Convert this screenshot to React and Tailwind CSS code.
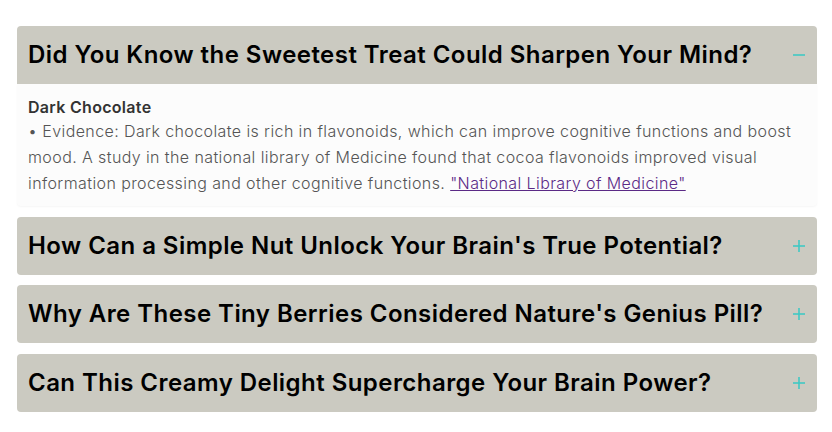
const items = [
  {
    q: 'Did You Know the Sweetest Treat Could Sharpen Your Mind?',
    open: true,
  },
  { q: "How Can a Simple Nut Unlock Your Brain's True Potential?" },
  { q: "Why Are These Tiny Berries Considered Nature's Genius Pill?" },
  { q: 'Can This Creamy Delight Supercharge Your Brain Power?' },
];

function Toggle({ open }) {
  return (
    <svg width="14" height="14" viewBox="0 0 14 14" className="shrink-0" aria-hidden="true">
      <line x1="1" y1="7" x2="13" y2="7" stroke="#3fc9c4" strokeWidth="1.6" />
      {!open && <line x1="7" y1="1" x2="7" y2="13" stroke="#3fc9c4" strokeWidth="1.6" />}
    </svg>
  );
}

export default function App() {
  return (
    <div className="w-[832px] h-[432px] bg-white pt-[26px] pl-[17px]" style={{ fontFamily: 'Inter, "Noto Sans", sans-serif' }}>
      <div className="w-[800px] flex flex-col gap-[10.5px]">
        {items.map((it) => (
          <div key={it.q}>
            <div className={`h-[58px] bg-[#cbcac1] flex items-center justify-between pl-[11px] pr-[11px] ${it.open ? 'rounded-t-[4px]' : 'rounded-[4px]'}`}>
              <h3 className="text-[24px] font-semibold text-black tracking-[0.45px]">{it.q}</h3>
              <Toggle open={it.open} />
            </div>
            {it.open && (
              <div className="bg-[#fcfcfc] px-[11px] pt-[13px] pb-[10px] rounded-b-[4px] shadow-[0_1px_2px_rgba(0,0,0,0.04)]">
                <p className="text-[16px] font-semibold text-[#333] leading-[20px] tracking-[0.3px]">Dark Chocolate</p>
                <p className="text-[16px] font-light text-[#555] leading-[26px] tracking-[0.4px] mt-[1px]">
                  • Evidence: Dark chocolate is rich in flavonoids, which can improve cognitive functions and boost mood. A study in the national library of Medicine found that cocoa flavonoids improved visual information processing and other cognitive functions.{' '}
                  <a href="#" className="text-[#5b2a86] underline">"National Library of Medicine"</a>
                </p>
              </div>
            )}
          </div>
        ))}
      </div>
    </div>
  );
}
